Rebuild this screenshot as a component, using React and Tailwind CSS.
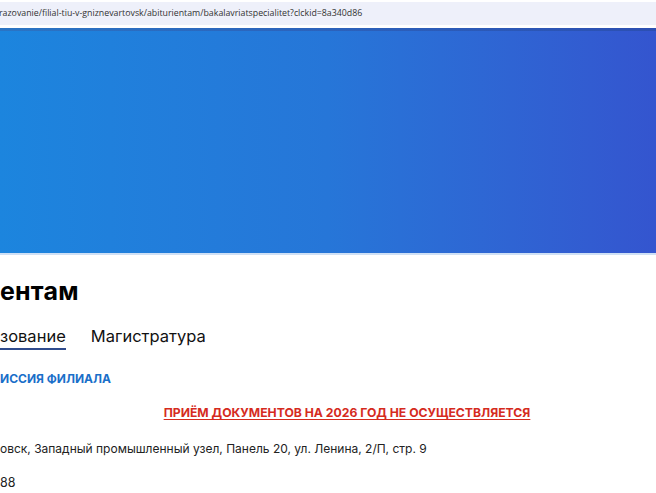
export default function App() {
  return (
    <div className="w-[656px] h-[493px] overflow-hidden bg-white relative" style={{ fontFamily: "Inter, 'Noto Sans', sans-serif" }}>
      {/* address bar */}
      <div className="h-[28px] bg-white pt-[2px]">
        <div className="h-[23px] bg-[#eef0fa] flex items-center">
          <span className="text-[8.8px] text-[#333] ml-[-1px]" style={{ fontFamily: "'Open Sans', 'Noto Sans', sans-serif" }}>
            razovanie/filial-tiu-v-gniznevartovsk/abiturientam/bakalavriatspecialitet?clckid=8a340d86
          </span>
        </div>
      </div>

      {/* banner */}
      <div className="h-[225px] bg-gradient-to-r from-[#1c85de] via-[#2676d8] to-[#3455cf] relative">
        <div className="h-[3px] bg-gradient-to-r from-[#2a74c4] to-[#2c4fb2]" />
      </div>
      <div className="h-[2px] bg-[#cfe0f5]" />

      {/* page content */}
      <div className="pt-[21px]">
        <h1 className="text-[25px] font-bold leading-[30px] text-black tracking-[0.2px]">ентам</h1>

        <div className="mt-[19px] flex items-end gap-[25px] text-[16.5px] leading-[22px] text-[#111]">
          <div className="border-b-2 border-[#2f4b8c] pb-[1px]">зование</div>
          <div className="pb-[3px]">Магистратура</div>
        </div>

        <div className="mt-[21px] text-[12px] font-bold text-[#1a6fc9] leading-[16px]">ИССИЯ ФИЛИАЛА</div>

        <div className="mt-[18px] flex justify-center pl-[38px]">
          <span className="text-[12.2px] font-bold text-[#d52b1e] underline underline-offset-2 leading-[16px]">
            ПРИЁМ ДОКУМЕНТОВ НА 2026 ГОД НЕ ОСУЩЕСТВЛЯЕТСЯ
          </span>
        </div>

        <div className="mt-[19px] text-[12px] text-[#222] leading-[18px]">
          овск, Западный промышленный узел, Панель 20, ул. Ленина, 2/П, стр. 9
        </div>

        <div className="mt-[16px] text-[12.5px] text-[#222] leading-[18px]">88</div>
      </div>
    </div>
  );
}
